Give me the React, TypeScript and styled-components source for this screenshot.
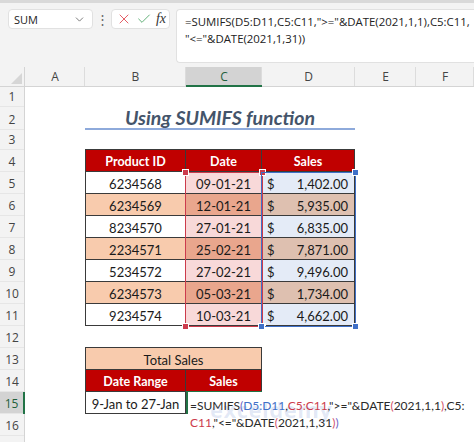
import styled, { createGlobalStyle } from 'styled-components';
import { X, Check, ChevronDown } from 'lucide-react';

type SaleRow = { id: string; date: string; amount: string };

const sales: SaleRow[] = [
  { id: '6234568', date: '09-01-21', amount: '1,402.00' },
  { id: '6234569', date: '12-01-21', amount: '5,935.00' },
  { id: '8234570', date: '27-01-21', amount: '6,835.00' },
  { id: '2234571', date: '25-02-21', amount: '7,871.00' },
  { id: '5234572', date: '27-02-21', amount: '9,496.00' },
  { id: '6234573', date: '05-03-21', amount: '1,734.00' },
  { id: '9234574', date: '10-03-21', amount: '4,662.00' },
];

const columns = ['A', 'B', 'C', 'D', 'E', 'F'];
const rowNumbers = Array.from({ length: 17 }, (_, i) => i + 1);

const PEACH = '#f8cbad';
const RED = '#c00000';
const REF_RED = '#cc3b4c';
const REF_BLUE = '#3f70c8';
const GREEN = '#217346';

// cell colours for the date/sales columns, tinted by the reference highlight
const dateBg = (even: boolean) => (even ? '#e9a68d' : '#f8d9d9');
const salesBg = (even: boolean) => (even ? '#dec0b0' : '#e4ebf7');

export default function App() {
  return (
    <>
      <GlobalStyle />
      <FormulaBar>
        <NameBox>
          <span>SUM</span>
          <ChevronDown size={13} strokeWidth={1.4} color="#555" />
        </NameBox>
        <Dots>⋮</Dots>
        <ActionBox>
          <X size={16} strokeWidth={1.3} color="#e0464f" />
          <Check size={16} strokeWidth={1.3} color="#4aa564" />
          <Fx>fx</Fx>
        </ActionBox>
        <FormulaInput>
          =SUMIFS(D5:D11,C5:C11,"&gt;="&amp;DATE(2021,1,1),C5:C11,
          <br />
          "&lt;="&amp;DATE(2021,1,31))
        </FormulaInput>
      </FormulaBar>

      <Sheet>
        <Corner>
          <Triangle />
        </Corner>
        {columns.map((c, i) => (
          <ColHead key={c} $c={i + 2} $active={c === 'C'}>
            {c}
          </ColHead>
        ))}
        {rowNumbers.map((n) => (
          <RowHead key={n} $r={n + 1} $active={n === 15}>
            {n < 17 ? n : ''}
          </RowHead>
        ))}

        <Title>Using SUMIFS function</Title>

        <TCell $r={5} $c={3} $bg={RED} $head $top $left>
          Product ID
        </TCell>
        <TCell $r={5} $c={4} $bg={RED} $head $top>
          Date
        </TCell>
        <TCell $r={5} $c={5} $bg={RED} $head $top>
          Sales
        </TCell>

        {sales.map((s, i) => {
          const even = i % 2 === 1;
          const r = i + 6;
          return [
            <TCell key={s.id} $r={r} $c={3} $bg={even ? PEACH : '#fff'} $left>
              {s.id}
            </TCell>,
            <TCell key={s.id + 'd'} $r={r} $c={4} $bg={dateBg(even)}>
              {s.date}
            </TCell>,
            <TCell key={s.id + 's'} $r={r} $c={5} $bg={salesBg(even)} $split>
              <span>$</span>
              <span>{s.amount}</span>
            </TCell>,
          ];
        })}

        <RefFrame $r="6 / 13" $c={4} $color={REF_RED}>
          <Handle $x="left" $y="top" $color={REF_RED} />
          <Handle $x="right" $y="top" $color={REF_RED} />
          <Handle $x="left" $y="bottom" $color={REF_RED} />
          <Handle $x="right" $y="bottom" $color={REF_RED} />
        </RefFrame>
        <RefFrame $r="6 / 13" $c={5} $color={REF_BLUE}>
          <Handle $x="right" $y="top" $color={REF_BLUE} />
          <Handle $x="left" $y="bottom" $color={REF_BLUE} />
          <Handle $x="right" $y="bottom" $color={REF_BLUE} />
        </RefFrame>

        <TCell $r={14} $c="3 / 5" $bg={PEACH} $top $left>
          Total Sales
        </TCell>
        <TCell $r={15} $c={3} $bg={RED} $head $left>
          Date Range
        </TCell>
        <TCell $r={15} $c={4} $bg={RED} $head>
          Sales
        </TCell>
        <TCell $r={16} $c={3} $bg="#fff" $left>
          9-Jan to 27-Jan
        </TCell>

        <EditCell>
          <Watermark>exceldemy</Watermark>
          <EditText>
            <Tok>=SUMIFS</Tok>
            <Tok $color="#6b63c4">(</Tok>
            <Tok $color={REF_BLUE}>D5:D11</Tok>
            <Tok>,</Tok>
            <Tok $color={REF_RED}>C5:C11</Tok>
            <Tok>,"&gt;="&amp;DATE</Tok>
            <Tok $color="#d0506a">(</Tok>
            <Tok>2021,1,1</Tok>
            <Tok $color="#d0506a">)</Tok>
            <Tok>,C5:</Tok>
            {'\n'}
            <Tok $color={REF_RED}>C11</Tok>
            <Tok>,"&lt;="&amp;DATE</Tok>
            <Tok $color="#d0506a">(</Tok>
            <Tok>2021,1,31</Tok>
            <Tok $color="#d0506a">)</Tok>
            <Tok $color="#6b63c4">)</Tok>
          </EditText>
        </EditCell>
      </Sheet>
    </>
  );
}

const GlobalStyle = createGlobalStyle`
  html, body {
    margin: 0;
    padding: 0;
    background: #fff;
    overflow: hidden;
  }
  body {
    font-family: 'Open Sans', 'Liberation Sans', sans-serif;
  }
`;

const FormulaBar = styled.div`
  height: 67px;
  box-sizing: border-box;
  background: #f3f3f3;
  border-top: 3px solid #d9d9d9;
  display: flex;
  align-items: flex-start;
  padding: 6px 0 0 8px;
  overflow: hidden;
`;

const NameBox = styled.div`
  width: 85px;
  height: 20px;
  box-sizing: border-box;
  background: #fff;
  border: 1px solid #e1e1e1;
  border-radius: 4px;
  display: flex;
  align-items: center;
  justify-content: space-between;
  padding: 0 6px 0 5px;
  font-size: 11px;
  color: #222;
`;

const Dots = styled.div`
  width: 18px;
  text-align: center;
  font-size: 13px;
  line-height: 20px;
  color: #666;
`;

const ActionBox = styled.div`
  width: 59px;
  height: 20px;
  box-sizing: border-box;
  background: #fff;
  border: 1px solid #e1e1e1;
  border-radius: 4px;
  display: flex;
  align-items: center;
  justify-content: space-between;
  padding: 0 3px 0 4px;
  margin-right: 6px;
`;

const Fx = styled.span`
  font-family: 'Liberation Serif', serif;
  font-style: italic;
  font-size: 14px;
  color: #333;
  line-height: 1;
`;

const FormulaInput = styled.div`
  flex: 1;
  height: 54px;
  box-sizing: border-box;
  background: #fff;
  border: 1px solid #e1e1e1;
  border-right: none;
  border-radius: 4px 0 0 4px;
  padding: 3px 0 0 8px;
  font-size: 11.4px;
  line-height: 17px;
  color: #222;
  white-space: nowrap;
`;

const Sheet = styled.div`
  display: grid;
  grid-template-columns: 25px 60px 101px 76px 93px 61px 1fr;
  grid-template-rows: 20px 20px 23px 20px 22px repeat(13, 22px);
  font-family: 'Lato', 'Open Sans', sans-serif;
`;

const Corner = styled.div`
  grid-row: 1;
  grid-column: 1;
  background: #f3f3f3;
  border-right: 1px solid #d4d4d4;
  border-bottom: 1px solid #d4d4d4;
  display: flex;
  align-items: flex-end;
  justify-content: flex-end;
  padding: 0 2px 2px 0;
`;

const Triangle = styled.div`
  width: 0;
  height: 0;
  border-left: 11px solid transparent;
  border-bottom: 11px solid #d6d6d6;
`;

const ColHead = styled.div<{ $c: number; $active?: boolean }>`
  grid-row: 1;
  grid-column: ${(p) => p.$c};
  background: ${(p) => (p.$active ? '#d3d3d3' : '#f3f3f3')};
  border-bottom: ${(p) => (p.$active ? `2px solid ${GREEN}` : '1px solid #d4d4d4')};
  box-shadow: inset -1px 0 0 #dcdcdc;
  display: flex;
  align-items: center;
  justify-content: center;
  font-family: 'Open Sans', sans-serif;
  font-size: 12px;
  color: ${(p) => (p.$active ? '#1f5f3c' : '#444')};
`;

const RowHead = styled.div<{ $r: number; $active?: boolean }>`
  grid-row: ${(p) => p.$r};
  grid-column: 1;
  background: ${(p) => (p.$active ? '#d3d3d3' : '#f3f3f3')};
  border-right: ${(p) => (p.$active ? `2px solid ${GREEN}` : '1px solid #d4d4d4')};
  box-shadow: inset 0 -1px 0 #e6e6e6;
  display: flex;
  align-items: flex-end;
  justify-content: center;
  padding-bottom: 2px;
  box-sizing: border-box;
  font-family: 'Open Sans', sans-serif;
  font-size: 12px;
  line-height: 16px;
  color: ${(p) => (p.$active ? '#1f5f3c' : '#444')};
`;

const Title = styled.div`
  grid-row: 3;
  grid-column: 3 / 6;
  border-bottom: 2px solid #8eaadb;
  display: flex;
  align-items: center;
  justify-content: center;
  font-size: 19.5px;
  font-weight: 700;
  font-style: italic;
  color: #44546a;
`;

const TCell = styled.div<{
  $r: number;
  $c: number | string;
  $bg: string;
  $head?: boolean;
  $top?: boolean;
  $left?: boolean;
  $split?: boolean;
}>`
  grid-row: ${(p) => p.$r};
  grid-column: ${(p) => p.$c};
  background: ${(p) => p.$bg};
  border-right: 1px solid #3a3a3a;
  border-bottom: 1px solid #3a3a3a;
  border-top: ${(p) => (p.$top ? '1px solid #3a3a3a' : 'none')};
  border-left: ${(p) => (p.$left ? '1px solid #3a3a3a' : 'none')};
  margin-top: ${(p) => (p.$top ? '-1px' : '0')};
  display: flex;
  align-items: center;
  justify-content: ${(p) => (p.$split ? 'space-between' : 'center')};
  padding: ${(p) => (p.$split ? '2px 6px 0 5px' : '2px 0 0')};
  font-size: ${(p) => (p.$head ? '12.5px' : '13px')};
  font-weight: ${(p) => (p.$head ? 700 : 400)};
  color: ${(p) => (p.$head ? '#fff' : '#1a1a1a')};
  white-space: nowrap;
`;

const RefFrame = styled.div<{ $r: string; $c: number; $color: string }>`
  grid-row: ${(p) => p.$r};
  grid-column: ${(p) => p.$c};
  position: relative;
  z-index: 2;
  margin: 0 -1px -1px -1px;
  border: 1.5px solid ${(p) => p.$color};
  pointer-events: none;
`;

const Handle = styled.div<{ $x: 'left' | 'right'; $y: 'top' | 'bottom'; $color: string }>`
  position: absolute;
  width: 5px;
  height: 5px;
  background: ${(p) => p.$color};
  border: 1px solid #fff;
  ${(p) => p.$x}: -4px;
  ${(p) => p.$y}: -4px;
`;

const EditCell = styled.div`
  grid-row: 16;
  grid-column: 4;
  position: relative;
  z-index: 3;
  border-left: 2px solid ${GREEN};
  border-top: 1px solid ${GREEN};
  margin-top: -1px;
  min-width: 0;
`;

const EditText = styled.div`
  position: absolute;
  left: 2px;
  top: 5px;
  white-space: pre;
  font-size: 12px;
  line-height: 17px;
  color: #2a2a2a;
`;

const Tok = styled.span<{ $color?: string }>`
  color: ${(p) => p.$color ?? 'inherit'};
`;

const Watermark = styled.div`
  position: absolute;
  left: 22px;
  top: 2px;
  font-family: 'Open Sans', sans-serif;
  font-size: 22px;
  font-weight: 700;
  letter-spacing: 0.5px;
  color: rgba(80, 120, 200, 0.16);
  pointer-events: none;
`;
